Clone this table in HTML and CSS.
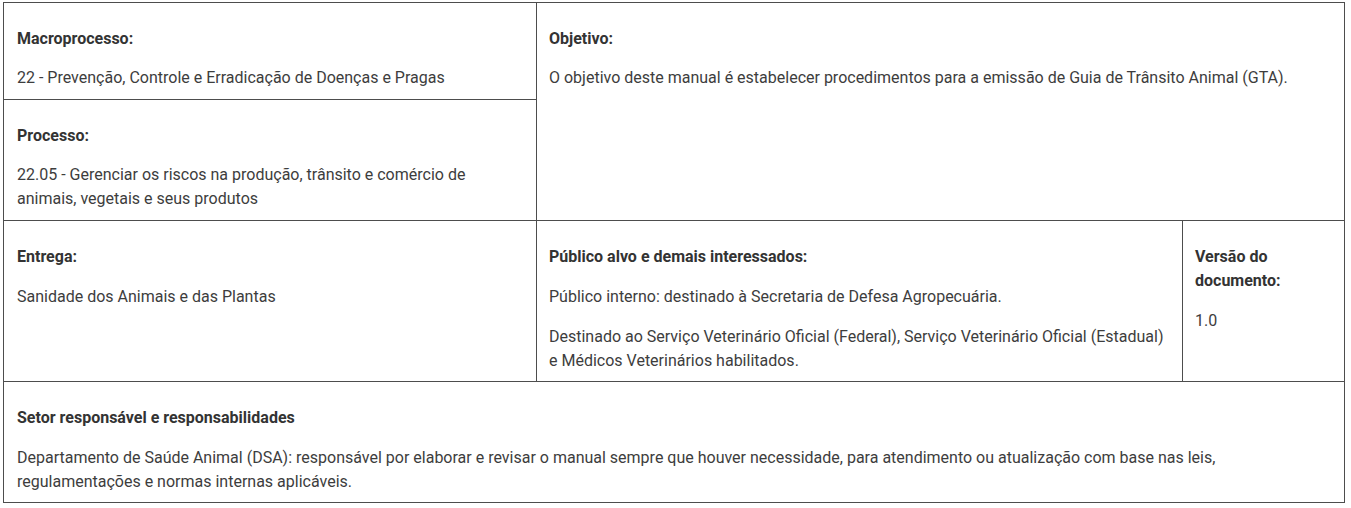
FILE: index.html
```html
<!DOCTYPE html>
<html lang="pt-BR">
<head>
<meta charset="utf-8">
<title>Manual GTA</title>
<link rel="stylesheet" href="styles.css">
</head>
<body>
<div class="sheet">
  <div class="cell c-macro">
    <p class="label">Macroprocesso:</p>
    <p>22 - Prevenção, Controle e Erradicação de Doenças e Pragas</p>
  </div>
  <div class="cell c-obj">
    <p class="label">Objetivo:</p>
    <p>O objetivo deste manual é estabelecer procedimentos para a emissão de Guia de Trânsito Animal (GTA).</p>
  </div>
  <div class="cell c-proc">
    <p class="label">Processo:</p>
    <p>22.05 - Gerenciar os riscos na produção, trânsito e comércio de animais, vegetais e seus produtos</p>
  </div>
  <div class="cell c-ent">
    <p class="label">Entrega:</p>
    <p>Sanidade dos Animais e das Plantas</p>
  </div>
  <div class="cell c-pub">
    <p class="label">Público alvo e demais interessados:</p>
    <p>Público interno: destinado à Secretaria de Defesa Agropecuária.</p>
    <p>Destinado ao Serviço Veterinário Oficial (Federal), Serviço Veterinário Oficial (Estadual) e Médicos Veterinários habilitados.</p>
  </div>
  <div class="cell c-ver">
    <p class="label">Versão do documento:</p>
    <p>1.0</p>
  </div>
  <div class="cell c-set">
    <p class="label">Setor responsável e responsabilidades</p>
    <p>Departamento de Saúde Animal (DSA): responsável por elaborar e revisar o manual sempre que houver necessidade, para atendimento ou atualização com base nas leis, regulamentações e normas internas aplicáveis.</p>
  </div>
</div>
</body>
</html>
```
FILE: styles.css
```css
html, body {
  margin: 0;
  background: #ffffff;
}
body {
  padding: 2px 0 0 3px;
  font-family: Roboto, "Liberation Sans", Arial, sans-serif;
  font-size: 16px;
  line-height: 24px;
  color: #3d3d3d;
}
.sheet {
  width: 1342px;
  box-sizing: border-box;
  display: grid;
  grid-template-columns: 533px 646px 162px;
  border-left: 1px solid #4d4d4d;
  border-top: 1px solid #4d4d4d;
}
.cell {
  border-right: 1px solid #4d4d4d;
  border-bottom: 1px solid #4d4d4d;
  padding: 24px 13px 8px 13px;
  display: flex;
  flex-direction: column;
  gap: 16px;
}
.cell p {
  margin: 0;
}
.label {
  font-weight: 700;
  color: #333333;
}
.c-macro { grid-column: 1; grid-row: 1; gap: 15px; padding-bottom: 9px; }
.c-obj { grid-column: 2 / 4; grid-row: 1 / 3; gap: 15px; padding-left: 12px; }
.c-proc { grid-column: 1; grid-row: 2; gap: 15px; padding-bottom: 9px; }
.c-ent { grid-column: 1; grid-row: 3; }
.c-pub { grid-column: 2; grid-row: 3; padding-left: 12px; }
.c-ver { grid-column: 3; grid-row: 3; padding-left: 12px; }
.c-set { grid-column: 1 / 4; grid-row: 4; }
```
